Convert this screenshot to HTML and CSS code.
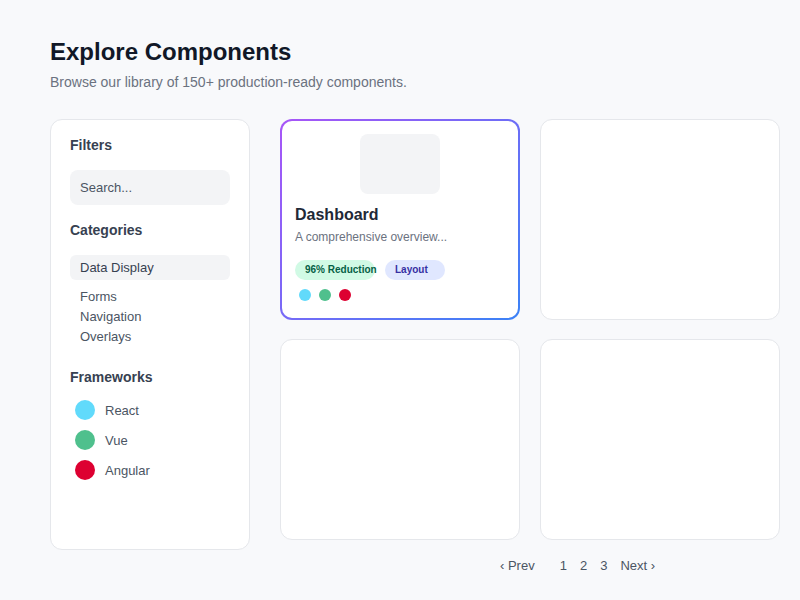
FILE: index.html
```html
<!DOCTYPE html>
<html>
<head>
<meta charset="utf-8">
<link rel="stylesheet" href="styles.css">
</head>
<body>
<div class="page">
  <header class="header">
    <h1 class="title">Explore Components</h1>
    <p class="subtitle">Browse our library of 150+ production-ready components.</p>
  </header>
  <div class="layout">
    <aside class="sidebar">
      <h2 class="side-heading">Filters</h2>
      <div class="search">Search...</div>
      <h2 class="side-heading cat-heading">Categories</h2>
      <div class="cat active">Data Display</div>
      <ul class="cat-list">
        <li>Forms</li>
        <li>Navigation</li>
        <li>Overlays</li>
      </ul>
      <h2 class="side-heading fw-heading">Frameworks</h2>
      <ul class="fw-list">
        <li><span class="fw-dot react"></span>React</li>
        <li><span class="fw-dot vue"></span>Vue</li>
        <li><span class="fw-dot angular"></span>Angular</li>
      </ul>
    </aside>
    <main class="main">
      <div class="grid">
        <div class="card featured">
          <div class="thumb"></div>
          <h3 class="card-title">Dashboard</h3>
          <p class="card-desc">A comprehensive overview...</p>
          <div class="tags">
            <span class="tag green">96% Reduction</span>
            <span class="tag indigo">Layout</span>
          </div>
          <div class="dots">
            <span class="dot react"></span>
            <span class="dot vue"></span>
            <span class="dot angular"></span>
          </div>
        </div>
        <div class="card"></div>
        <div class="card"></div>
        <div class="card"></div>
      </div>
      <nav class="pager">
        <span class="pg prev">‹ Prev</span>
        <span class="pg num">1</span>
        <span class="pg num">2</span>
        <span class="pg num">3</span>
        <span class="pg next">Next ›</span>
      </nav>
    </main>
  </div>
</div>
</body>
</html>
```

FILE: styles.css
```css
* { box-sizing: border-box; }
html, body { margin: 0; padding: 0; }
body {
  background: #f8f9fb;
  font-family: "Liberation Sans", Arial, sans-serif;
  color: #374151;
  width: 800px;
  height: 600px;
  overflow: hidden;
}
.page { padding: 36px 20px 0 50px; }
.header { margin-bottom: 27px; }
.title {
  margin: 0;
  font-size: 24px;
  line-height: 32px;
  font-weight: 700;
  color: #111827;
}
.subtitle {
  margin: 4px 0 0;
  font-size: 14px;
  line-height: 20px;
  color: #6b7280;
}
.layout { display: flex; gap: 30px; align-items: flex-start; }
.sidebar {
  width: 200px;
  height: 431px;
  background: #fff;
  border: 1px solid #e5e7eb;
  border-radius: 12px;
  padding: 16px 19px;
}
.side-heading {
  margin: 0;
  font-size: 14px;
  line-height: 18px;
  font-weight: 700;
  color: #374151;
}
.search {
  margin-top: 16px;
  height: 35px;
  background: #f3f4f6;
  border-radius: 8px;
  padding: 0 10px;
  font-size: 13px;
  line-height: 35px;
  color: #4b5563;
}
.cat-heading { margin-top: 16px; }
.cat {
  margin-top: 16px;
  height: 25px;
  line-height: 25px;
  border-radius: 6px;
  padding: 0 10px;
  font-size: 13px;
  color: #374151;
}
.cat.active { background: #f3f4f6; }
.cat-list {
  list-style: none;
  margin: 7px 0 0;
  padding: 0 10px;
  font-size: 13px;
  line-height: 20px;
  color: #4b5563;
}
.fw-heading { margin-top: 21px; }
.fw-list {
  list-style: none;
  margin: 14px 0 0;
  padding: 0 0 0 5px;
  font-size: 13px;
  color: #4b5563;
}
.fw-list li {
  display: flex;
  align-items: center;
  gap: 10px;
  height: 20px;
  margin-bottom: 10px;
}
.fw-dot { width: 20px; height: 20px; border-radius: 50%; display: inline-block; }
.react { background: #61dafb; }
.vue { background: #4fc08d; }
.angular { background: #dd0031; }
.main { width: 500px; }
.grid {
  display: grid;
  grid-template-columns: 240px 240px;
  grid-auto-rows: 201px;
  column-gap: 20px;
  row-gap: 19px;
}
.card {
  background: #fff;
  border: 1px solid #e5e7eb;
  border-radius: 12px;
}
.card.featured {
  border: 2px solid transparent;
  background:
    linear-gradient(#fff, #fff) padding-box,
    linear-gradient(135deg, #a855f7, #3b82f6) border-box;
  padding: 13px 13px;
}
.thumb {
  width: 80px;
  height: 60px;
  margin: 0 auto;
  background: #f3f4f6;
  border-radius: 8px;
}
.card-title {
  margin: 11px 0 0;
  font-size: 16px;
  line-height: 20px;
  font-weight: 700;
  color: #1f2937;
}
.card-desc {
  margin: 4px 0 0;
  font-size: 12px;
  line-height: 16px;
  color: #6b7280;
}
.tags { display: flex; gap: 10px; margin-top: 15px; }
.tag {
  height: 20px;
  line-height: 20px;
  border-radius: 10px;
  padding: 0 10px;
  font-size: 10px;
  font-weight: 700;
  white-space: nowrap;
  overflow: visible;
}
.tag.green { width: 80px; background: #d1fae5; color: #065f46; }
.tag.indigo { width: 60px; background: #e0e7ff; color: #3730a3; }
.dots { display: flex; gap: 8px; margin-top: 9px; padding-left: 4px; }
.dot { width: 12px; height: 12px; border-radius: 50%; display: inline-block; }
.pager {
  display: flex;
  align-items: center;
  margin-top: 17px;
  padding-left: 220px;
  font-size: 13px;
  line-height: 18px;
  color: #4b5563;
}
.pg.prev { margin-right: 25px; }
.pg.num { margin-right: 13px; }
```
